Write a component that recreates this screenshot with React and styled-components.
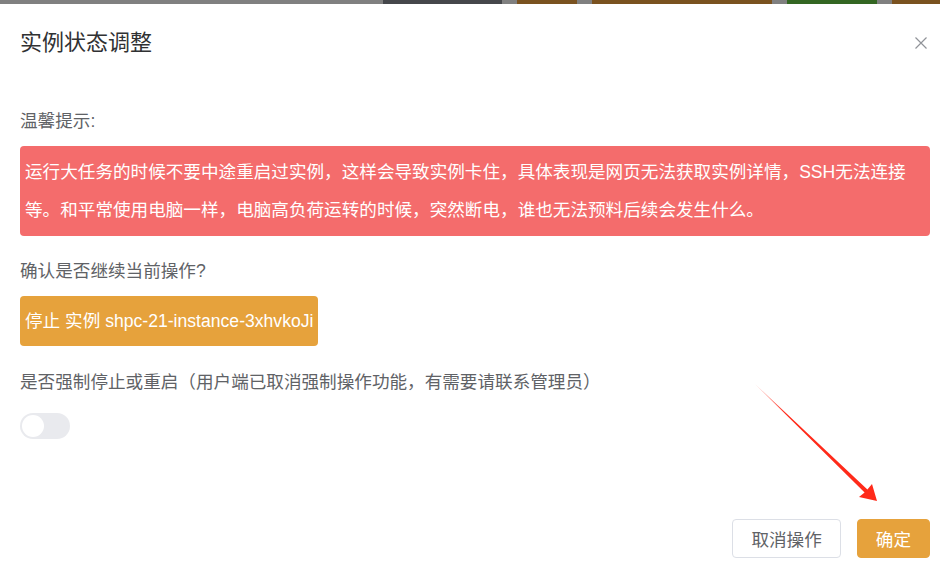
import React, { useState } from "react";
import styled, { createGlobalStyle } from "styled-components";

const GlobalStyle = createGlobalStyle`
  html, body { margin: 0; padding: 0; background: #ffffff; }
  body { font-family: "Liberation Sans", "Noto Sans CJK SC", sans-serif; }
  * { box-sizing: border-box; }
`;

const Page = styled.div`
  position: relative;
  width: 940px;
  height: 574px;
  overflow: hidden;
  background: #fff;
`;

const Strip = styled.div`
  display: flex;
  height: 4px;
  background: #808080;
`;

const Segment = styled.div`
  width: ${(p) => p.$w}px;
  margin-left: ${(p) => p.$gap}px;
  background: ${(p) => p.$color};
`;

const Header = styled.div`
  display: flex;
  align-items: center;
  justify-content: space-between;
  padding: 24px 13px 0 20px;
`;

const Title = styled.h2`
  margin: 0;
  font-size: 22px;
  line-height: 30px;
  font-weight: 400;
  color: #303133;
`;

const CloseButton = styled.button`
  display: flex;
  align-items: center;
  justify-content: center;
  width: 12px;
  height: 12px;
  padding: 0;
  border: none;
  background: transparent;
  cursor: pointer;
`;

const Body = styled.div`
  display: flex;
  flex-direction: column;
  align-items: flex-start;
  padding: 51px 10px 0 20px;
`;

const Label = styled.div`
  font-size: 17.6px;
  line-height: 24px;
  color: #606266;
  margin-top: ${(p) => p.$mt || 0}px;
`;

const Warning = styled.div`
  align-self: stretch;
  margin-top: 13px;
  padding: 7px 5px;
  background: #f46c6c;
  border-radius: 4px;
  color: #ffffff;
  font-size: 17.6px;
  line-height: 38px;
`;

const Target = styled.div`
  margin-top: 13px;
  padding: 5px;
  background: #e6a23c;
  border-radius: 4px;
  color: #ffffff;
  font-size: 17.6px;
  line-height: 40px;
  white-space: nowrap;
`;

const Switch = styled.button`
  position: relative;
  margin-top: 19px;
  width: 50px;
  height: 26px;
  padding: 0;
  border: none;
  border-radius: 13px;
  background: ${(p) => (p.$on ? "#e6a23c" : "#e9eaee")};
  cursor: pointer;
  transition: background 0.2s;
`;

const Knob = styled.span`
  position: absolute;
  top: 2px;
  left: ${(p) => (p.$on ? "26px" : "2px")};
  width: 22px;
  height: 22px;
  border-radius: 50%;
  background: #ffffff;
  transition: left 0.2s;
`;

const Footer = styled.div`
  display: flex;
  justify-content: flex-end;
  gap: 16px;
  padding: 80px 10px 0 20px;
`;

const Button = styled.button`
  height: 39px;
  padding: 0 18px;
  border-radius: 4px;
  font-family: inherit;
  font-size: 17.6px;
  cursor: pointer;
  border: 1px solid ${(p) => (p.$primary ? "#e6a23c" : "#dcdfe6")};
  background: ${(p) => (p.$primary ? "#e6a23c" : "#ffffff")};
  color: ${(p) => (p.$primary ? "#ffffff" : "#606266")};
`;

const Annotation = styled.svg`
  position: absolute;
  left: 0;
  top: 0;
  pointer-events: none;
`;

const segments = [
  { w: 119, gap: 383, color: "#45474b" },
  { w: 60, gap: 15, color: "#7a5220" },
  { w: 180, gap: 15, color: "#7a5220" },
  { w: 90, gap: 15, color: "#336622" },
  { w: 48, gap: 15, color: "#7a5220" },
];

export default function App() {
  const [force, setForce] = useState(false);
  return (
    <Page>
      <GlobalStyle />
      <Strip>
        {segments.map((s, i) => (
          <Segment key={i} $w={s.w} $gap={s.gap} $color={s.color} />
        ))}
      </Strip>
      <Header>
        <Title>实例状态调整</Title>
        <CloseButton aria-label="close">
          <svg width="12" height="12" viewBox="0 0 12 12">
            <path d="M0.5 0.5 L11.5 11.5 M11.5 0.5 L0.5 11.5" stroke="#909399" strokeWidth="1.2" fill="none" />
          </svg>
        </CloseButton>
      </Header>
      <Body>
        <Label>温馨提示:</Label>
        <Warning>
          运行大任务的时候不要中途重启过实例，这样会导致实例卡住，具体表现是网页无法获取实例详情，SSH无法连接等。和平常使用电脑一样，电脑高负荷运转的时候，突然断电，谁也无法预料后续会发生什么。
        </Warning>
        <Label $mt={23}>确认是否继续当前操作?</Label>
        <Target>停止 实例 shpc-21-instance-3xhvkoJi</Target>
        <Label $mt={24}>是否强制停止或重启（用户端已取消强制操作功能，有需要请联系管理员）</Label>
        <Switch $on={force} onClick={() => setForce(!force)} aria-label="force">
          <Knob $on={force} />
        </Switch>
      </Body>
      <Footer>
        <Button>取消操作</Button>
        <Button $primary>确定</Button>
      </Footer>
      <Annotation width="940" height="574" viewBox="0 0 940 574">
        <defs>
          <linearGradient id="arrowGrad" x1="755" y1="384" x2="877" y2="501" gradientUnits="userSpaceOnUse">
            <stop offset="0" stopColor="#ff2a1a" stopOpacity="0.25" />
            <stop offset="0.25" stopColor="#ff2a1a" stopOpacity="1" />
            <stop offset="1" stopColor="#ff2a1a" stopOpacity="1" />
          </linearGradient>
        </defs>
        <polygon
          points="755,384 867.4,489.6 872,484 877,501 859,497 864.6,492.4"
          fill="url(#arrowGrad)"
        />
      </Annotation>
    </Page>
  );
}
